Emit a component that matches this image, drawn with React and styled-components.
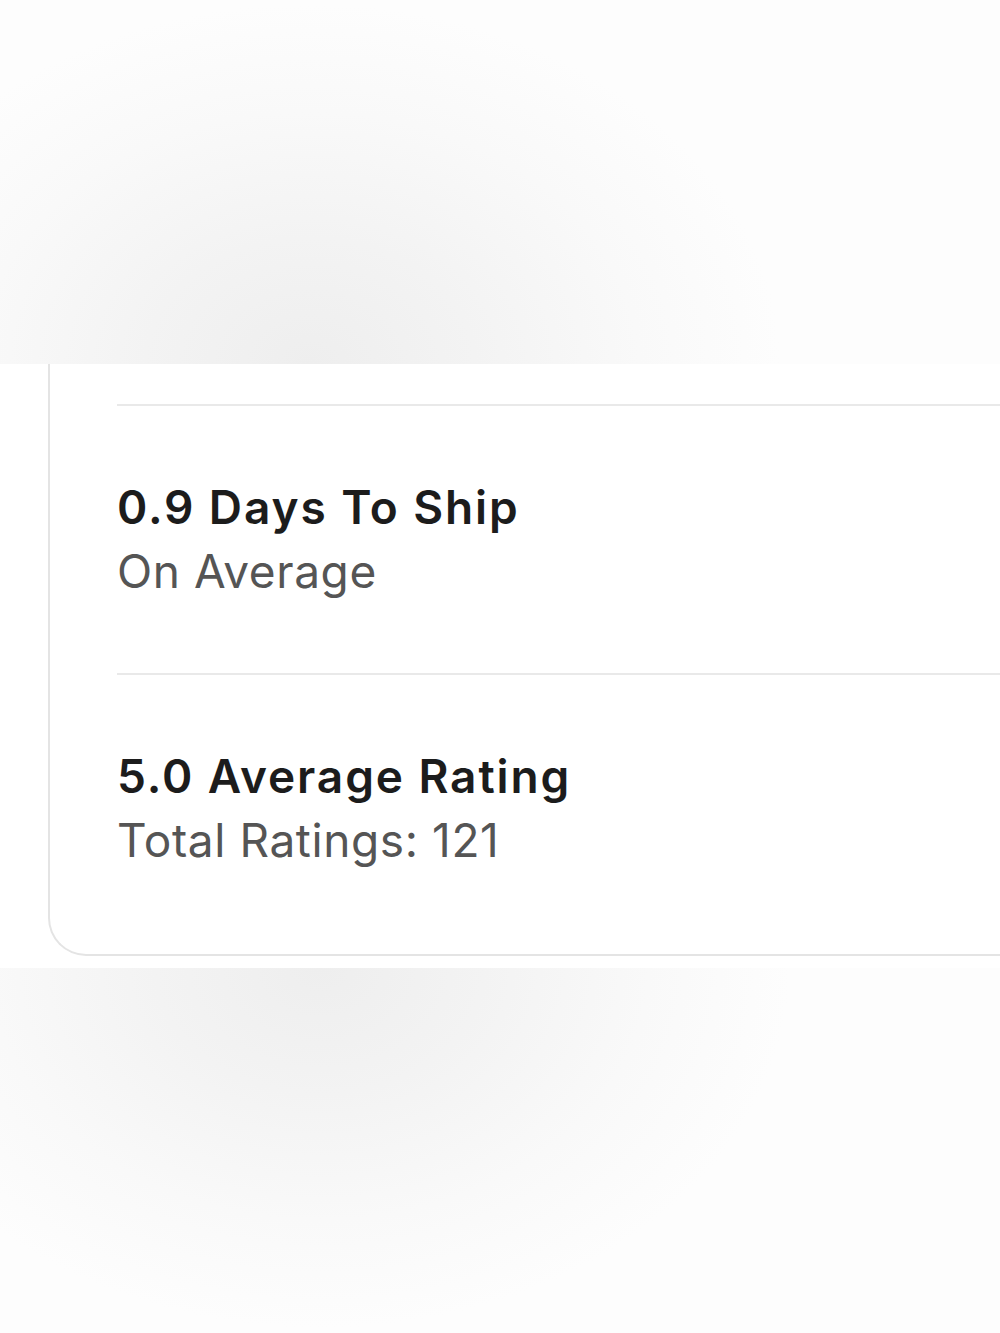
import React from 'react'
import styled, { createGlobalStyle } from 'styled-components';

const GlobalStyle = createGlobalStyle`
  html, body {
    margin: 0;
    padding: 0;
    background: #fdfdfd;
  }
  body {
    font-family: 'Inter', 'Noto Sans', sans-serif;
  }
`;

const Page = styled.div`
  width: 1000px;
  height: 1333px;
  display: flex;
  flex-direction: column;
  overflow: hidden;
`;

const Shade = styled.div`
  height: ${props => props.h}px;
  flex-shrink: 0;
  background:
    radial-gradient(ellipse 470px 360px at ${props => props.at}, #eeeeee 0%, #f3f3f3 35%, #f9f9f9 70%, rgba(253,253,253,0) 100%),
    #fdfdfd;
`;

const Section = styled.div`
  height: 604px;
  flex-shrink: 0;
  background: #fff;
  overflow: hidden;
`;

const Card = styled.div`
  margin-left: 48px;
  width: 1100px;
  height: 592px;
  box-sizing: border-box;
  border-left: 2px solid #e4e4e4;
  border-bottom: 2px solid #e4e4e4;
  border-bottom-left-radius: 38px;
  padding: 40px 0 0 67px;
`;

const Row = styled.div`
  border-top: 2px solid #e9e9e9;
  padding: 69px 0 70px 0;
`;

const Title = styled.div`
  font-size: 46px;
  line-height: 64px;
  font-weight: 600;
  color: #1c1c1c;
  letter-spacing: 1.9px;
`;

const Sub = styled.div`
  font-size: 46px;
  line-height: 64px;
  font-weight: 400;
  color: #555;
  letter-spacing: 0.6px;
`;

const stats = [
  { title: '0.9 Days To Ship', sub: 'On Average' },
  { title: '5.0 Average Rating', sub: 'Total Ratings: 121' },
];

const App = () => {
  return (
    <>
      <GlobalStyle />
      <Page>
        <Shade h={364} at="31% 100%" />
        <Section>
          <Card>
            {stats.map((s, i) => (
              <Row key={i}>
                <Title>{s.title}</Title>
                <Sub>{s.sub}</Sub>
              </Row>
            ))}
          </Card>
        </Section>
        <Shade h={365} at="32% 0%" />
      </Page>
    </>
  )
}

export default App;
